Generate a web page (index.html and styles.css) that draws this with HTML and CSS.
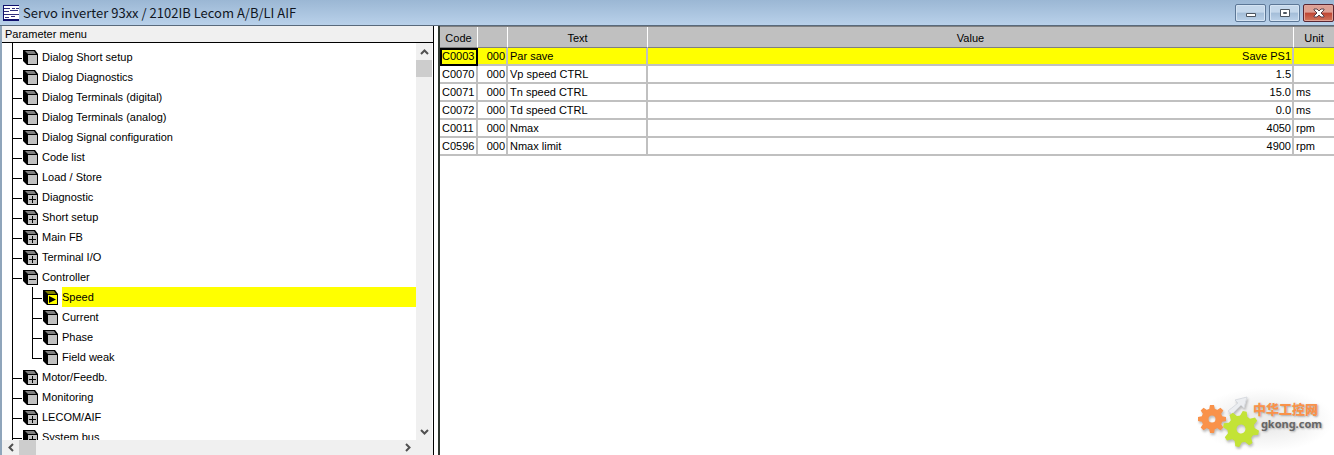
FILE: index.html
```
<!DOCTYPE html>
<html lang="en">

<head>
  <meta charset="UTF-8">
  <meta name="viewport" content="width=device-width, initial-scale=1.0">
  <title>Servo inverter 93xx</title>
  <link rel="stylesheet" href="styles.css">
</head>

<body>
  <!-- icons used by the tree -->
  <svg class="defs" width="0" height="0" aria-hidden="true">
    <symbol id="cube" viewBox="0 0 16 16">
      <path d="M0 1H12L15 5V16H4L0 12Z" fill="#000"/>
      <path d="M2 2H11L13 5H5Z" fill="#808080"/>
      <path d="M5 6H14V15H5Z" fill="#c0c0c0"/>
    </symbol>
    <symbol id="cube-plus" viewBox="0 0 16 16">
      <use href="#cube"/>
      <path d="M9 7H10V10H13V11H10V14H9V11H6V10H9Z" fill="#000"/>
    </symbol>
    <symbol id="cube-minus" viewBox="0 0 16 16">
      <use href="#cube"/>
      <path d="M6 10H13V11H6Z" fill="#000"/>
    </symbol>
    <symbol id="cube-play" viewBox="0 0 16 16">
      <path d="M0 1H12L15 5V16H4L0 12Z" fill="#000"/>
      <path d="M2 2H11L13 5H5Z" fill="#808000"/>
      <path d="M5 6H14V15H5Z" fill="#ff0"/>
      <path d="M6 7L13 10.500L6 14Z" fill="#000"/>
    </symbol>
  </svg>

  <header class="titlebar">
    <svg class="app-icon" width="16" height="16" viewBox="0 0 16 16" aria-hidden="true">
      <path d="M0 0H16V16H0Z" fill="#fff"/>
      <path d="M0 0H16V1H0ZM0 0H1V16H0ZM0 14H16V16H0Z" fill="#10106c"/>
      <path d="M1 3H7V4H1ZM9 3H12V4H9ZM13 3H16V4H13ZM1 6H6V7H1ZM7 5H15V6H7ZM1 9H16V10H1ZM2 12H6V13H2ZM8 11H12V12H8Z" fill="#30307c"/>
    </svg>
    <h1>Servo inverter 93xx / 2102IB Lecom A/B/LI AIF</h1>
    <div class="window-buttons">
      <button type="button" aria-label="Minimize">
        <svg width="12" height="10" viewBox="0 0 12 10"><path d="M1.500 5.500H10.500V8.500H1.500Z" fill="#fff" stroke="#4c5560"/></svg>
      </button>
      <button type="button" aria-label="Maximize">
        <svg width="12" height="10" viewBox="0 0 12 10"><path d="M1.500 1.500H10.500V8.500H1.500Z" fill="#fff" stroke="#4c5560"/><path d="M4.500 4.500H7.500V5.500H4.500Z" fill="#fff" stroke="#4c5560"/></svg>
      </button>
      <button type="button" class="close" aria-label="Close">
        <svg width="12" height="10" viewBox="0 0 12 10"><path d="M1 1H4L6 3L8 1H11V2L8 5L11 8V9H8L6 7L4 9H1V8L4 5L1 2Z" fill="#fff" stroke="#5a4048"/></svg>
      </button>
    </div>
  </header>

  <main class="panes">
    <section class="menu">
      <h2>Parameter menu</h2>
      <div class="scroll-area">
        <div class="viewport">
          <ul class="tree">
            <li><button type="button"><svg><use href="#cube"/></svg><span>Dialog Short setup</span></button></li>
            <li><button type="button"><svg><use href="#cube"/></svg><span>Dialog Diagnostics</span></button></li>
            <li><button type="button"><svg><use href="#cube"/></svg><span>Dialog Terminals (digital)</span></button></li>
            <li><button type="button"><svg><use href="#cube"/></svg><span>Dialog Terminals (analog)</span></button></li>
            <li><button type="button"><svg><use href="#cube"/></svg><span>Dialog Signal configuration</span></button></li>
            <li><button type="button"><svg><use href="#cube"/></svg><span>Code list</span></button></li>
            <li><button type="button"><svg><use href="#cube"/></svg><span>Load / Store</span></button></li>
            <li><button type="button"><svg><use href="#cube-plus"/></svg><span>Diagnostic</span></button></li>
            <li><button type="button"><svg><use href="#cube-plus"/></svg><span>Short setup</span></button></li>
            <li><button type="button"><svg><use href="#cube-plus"/></svg><span>Main FB</span></button></li>
            <li><button type="button"><svg><use href="#cube-plus"/></svg><span>Terminal I/O</span></button></li>
            <li>
              <button type="button" aria-expanded="true"><svg><use href="#cube-minus"/></svg><span>Controller</span></button>
              <ul class="branch">
                <li><button type="button" class="selected"><svg><use href="#cube-play"/></svg><span>Speed</span></button></li>
                <li><button type="button"><svg><use href="#cube"/></svg><span>Current</span></button></li>
                <li><button type="button"><svg><use href="#cube"/></svg><span>Phase</span></button></li>
                <li><button type="button"><svg><use href="#cube"/></svg><span>Field weak</span></button></li>
              </ul>
            </li>
            <li><button type="button"><svg><use href="#cube-plus"/></svg><span>Motor/Feedb.</span></button></li>
            <li><button type="button"><svg><use href="#cube"/></svg><span>Monitoring</span></button></li>
            <li><button type="button"><svg><use href="#cube-plus"/></svg><span>LECOM/AIF</span></button></li>
            <li><button type="button"><svg><use href="#cube-plus"/></svg><span>System bus</span></button></li>
          </ul>
        </div>
        <div class="scrollbar vertical">
          <button type="button" aria-label="Scroll up"><svg width="9" height="6" viewBox="0 0 9 6"><path d="M1 5L4.500 1.500L8 5"/></svg></button>
          <div class="thumb"></div>
          <button type="button" aria-label="Scroll down"><svg width="9" height="6" viewBox="0 0 9 6"><path d="M1 1L4.500 4.500L8 1"/></svg></button>
        </div>
      </div>
      <div class="scrollbar horizontal">
        <button type="button" aria-label="Scroll left"><svg width="6" height="9" viewBox="0 0 6 9"><path d="M5 1L1.500 4.500L5 8"/></svg></button>
        <div class="thumb"></div>
        <button type="button" aria-label="Scroll right"><svg width="6" height="9" viewBox="0 0 6 9"><path d="M1 1L4.500 4.500L1 8"/></svg></button>
      </div>
    </section>

    <div class="splitter"></div>

    <section class="codes">
      <table>
        <colgroup>
          <col class="col-code">
          <col class="col-sub">
          <col class="col-text">
          <col>
          <col class="col-unit">
        </colgroup>
        <thead>
          <tr><th>Code</th><th></th><th>Text</th><th>Value</th><th>Unit</th></tr>
        </thead>
        <tbody>
          <tr class="active"><td class="focus">C0003</td><td class="num">000</td><td>Par save</td><td class="num">Save PS1</td><td></td></tr>
          <tr><td>C0070</td><td class="num">000</td><td>Vp speed CTRL</td><td class="num">1.5</td><td></td></tr>
          <tr><td>C0071</td><td class="num">000</td><td>Tn speed CTRL</td><td class="num">15.0</td><td>ms</td></tr>
          <tr><td>C0072</td><td class="num">000</td><td>Td speed CTRL</td><td class="num">0.0</td><td>ms</td></tr>
          <tr><td>C0011</td><td class="num">000</td><td>Nmax</td><td class="num">4050</td><td>rpm</td></tr>
          <tr><td>C0596</td><td class="num">000</td><td>Nmax limit</td><td class="num">4900</td><td>rpm</td></tr>
        </tbody>
      </table>
    </section>
  </main>

  <div class="watermark">
    <svg width="57" height="64" viewBox="0 0 57 64" aria-hidden="true">
      <path d="M32 23L42 15L39 12L51 9L48 20L45 17L36 26Z" fill="#eceef1" stroke="#d8dbe0"/>
      <g transform="translate(16 31)" fill="#f9924a">
        <circle r="7" fill="none" stroke="#f9924a" stroke-width="7"/>
        <path id="teeth" d="M-2 -14H2L3 -9H-3ZM-2 14H2L3 9H-3ZM-14 -2V2L-9 3V-3ZM14 -2V2L9 3V-3Z"/>
        <use href="#teeth" transform="rotate(45)"/>
      </g>
      <g transform="translate(45 41) rotate(12)" fill="#c3e336">
        <circle r="9" fill="none" stroke="#c3e336" stroke-width="9"/>
        <path id="big-teeth" d="M-2 -18H2L4 -12H-4ZM-2 18H2L4 12H-4ZM-18 -2V2L-12 4V-4ZM18 -2V2L12 4V-4Z"/>
        <use href="#big-teeth" transform="rotate(45)"/>
      </g>
    </svg>
    <div class="watermark-text">
      <strong lang="zh">中华工控网</strong>
      <span>gkong.com</span>
    </div>
  </div>
</body>

</html>
```
FILE: styles.css
```
* {
  box-sizing: border-box;
}

body {
  display: flex;
  flex-direction: column;
  height: 100vh;
  margin: 0;
  overflow: hidden;
  background: #fff;
  color: #000;
  font-family: "Liberation Sans", Arial, sans-serif;
  font-size: 11px;
}

h1, h2, ul {
  margin: 0;
  padding: 0;
  font-weight: normal;
}

ul {
  list-style: none;
}

button {
  display: flex;
  align-items: center;
  justify-content: center;
  padding: 0;
  border: 0;
  background: none;
  color: inherit;
  font: inherit;
}

.defs {
  position: absolute;
}

/* title bar */
.titlebar {
  display: flex;
  flex: none;
  align-items: center;
  gap: 4px;
  height: 26px;
  padding-left: 3px;
  border-bottom: 1px solid #596a7c;
  background: linear-gradient(#9bb7d4, #b9d1ea);
}

.titlebar h1 {
  flex: 1;
  padding-top: 1px;
  color: #10161f;
  font-family: "Noto Sans CJK SC", sans-serif;
  font-size: 13px;
  line-height: 16px;
}

.window-buttons {
  display: flex;
  gap: 3px;
  padding-top: 1px;
}

.window-buttons button {
  width: 31px;
  height: 18px;
  border: 1px solid #5c7796;
  border-radius: 2px;
  background: linear-gradient(#c5d8eb 45%, #a3bdd8 50%, #bcd2e9);
  box-shadow: inset 0 0 0 1px #d5e4f3;
}

.window-buttons .close {
  border-color: #582632;
  background: linear-gradient(#dda094 45%, #bf4532 50%, #d0765f);
  box-shadow: inset 0 0 0 1px #e2a59a;
}

/* panes */
.panes {
  display: flex;
  flex: 1;
  min-height: 0;
  border-left: 2px solid #8fa5bb;
}

.menu {
  display: flex;
  flex: none;
  flex-direction: column;
  width: 431px;
}

.menu h2 {
  flex: none;
  height: 17px;
  padding-left: 3px;
  border-bottom: 1px solid #000;
  background: #f0f0f0;
  font-size: 11px;
  line-height: 16px;
}

.scroll-area {
  display: flex;
  flex: 1;
  min-height: 0;
}

.viewport {
  flex: 1;
  overflow: hidden;
  padding-left: 10px;
}

.tree {
  padding-top: 4px;
  border-left: 1px solid #000;
}

.tree button {
  justify-content: flex-start;
  width: 100%;
  height: 20px;
  text-align: left;
}

.tree button::before {
  content: "";
  width: 9px;
  height: 1px;
  margin-top: 3px;
  background: #000;
}

.tree svg {
  width: 16px;
  height: 16px;
  margin: 0 3px 0 1px;
}

.tree span {
  flex: 1;
  line-height: 20px;
}

.branch {
  margin-left: 19px;
  padding-left: 1px;
  background: linear-gradient(#000, #000) 0 0 / 1px calc(100% - 8px) no-repeat;
}

.selected span {
  background: #ff0;
}

/* scrollbars */
.scrollbar {
  display: flex;
  flex: none;
  background: #f0f0f0;
}

.scrollbar path {
  fill: none;
  stroke: #505050;
  stroke-width: 2;
}

.scrollbar .thumb {
  flex: none;
  background: #cdcdcd;
}

.vertical {
  flex-direction: column;
  width: 16px;
  margin-right: 1px;
}

.vertical button {
  height: 17px;
}

.vertical .thumb {
  height: 17px;
}

.horizontal {
  height: 15px;
  padding-right: 17px;
}

.horizontal button {
  width: 17px;
}

.horizontal .thumb {
  width: 17px;
}

.scrollbar button:last-child {
  margin-top: auto;
}

.horizontal button:last-child {
  margin-top: 0;
  margin-left: auto;
}

.splitter {
  flex: none;
  width: 7px;
  border-right: 2px solid #303830;
  border-left: 1px solid #000;
  background: #fff;
}

/* code table */
.codes {
  flex: 1;
  min-width: 0;
  border-top: 1px solid #808080;
}

table {
  width: 100%;
  border-spacing: 0;
  table-layout: fixed;
}

.col-code {
  width: 38px;
}

.col-sub {
  width: 30px;
}

.col-text {
  width: 140px;
}

.col-unit {
  width: 40px;
}

th {
  height: 21px;
  padding: 2px 0 0;
  border-right: 1px solid #fff;
  border-bottom: 1px solid #808080;
  background: #c0c0c0;
  font-weight: normal;
}

td {
  height: 18px;
  padding: 1px 2px 0;
  border-right: 2px solid #c0c0c0;
  border-bottom: 2px solid #c0c0c0;
  line-height: 15px;
  white-space: nowrap;
}

th:last-child, td:last-child {
  border-right: 0;
}

.num {
  padding-right: 1px;
  text-align: right;
}

.active {
  background: #ff0;
}

.focus {
  outline: 2px solid #000;
  outline-offset: -2px;
}

/* site mark in the corner */
.watermark {
  position: absolute;
  right: 0;
  bottom: 3px;
  display: flex;
  align-items: center;
  padding-right: 12px;
  background: radial-gradient(closest-side, #ececec 30%, #fff);
}

.watermark svg {
  overflow: visible;
  filter: drop-shadow(1px 2px 1px #bbb);
}

.watermark-text {
  display: flex;
  flex-direction: column;
  padding-bottom: 8px;
  text-shadow: 1px 1px 2px #aaa;
}

.watermark strong {
  color: #f9924a;
  font-family: "Noto Sans CJK SC", sans-serif;
  font-size: 13px;
  font-weight: 900;
  line-height: 16px;
}

.watermark span {
  padding-left: 8px;
  color: #666;
  font-family: "Noto Sans", sans-serif;
  font-size: 11px;
  font-weight: bold;
  line-height: 14px;
}
```
